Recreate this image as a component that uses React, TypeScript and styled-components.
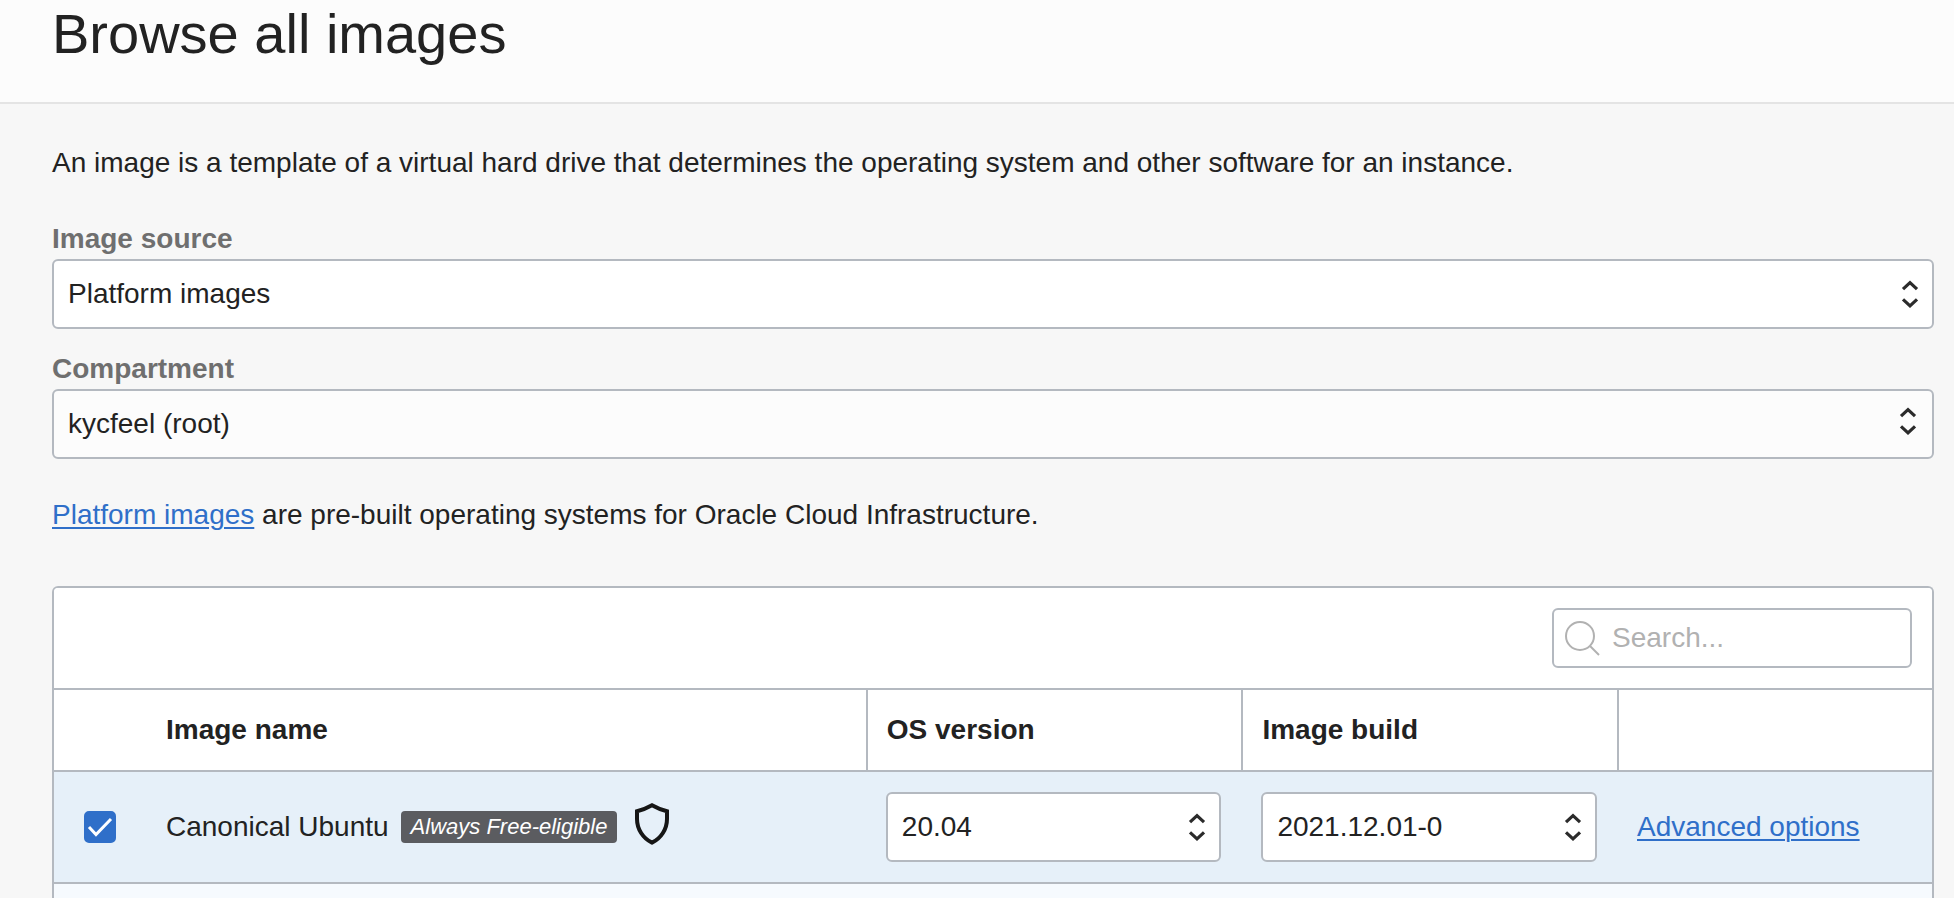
import React from "react";
import styled, { createGlobalStyle } from "styled-components";

const GlobalStyle = createGlobalStyle`
  *, *::before, *::after { box-sizing: border-box; }
  html { background: #f7f7f7; }
  body {
    margin: 0;
    color: #222222;
    font-family: "Liberation Sans", Arial, sans-serif;
    font-size: 28px;
    line-height: 40px;
  }
`;

const line = "#b4b9c0";

const Page = styled.div`
  min-height: 100vh;
  display: flex;
  flex-direction: column;
`;

const Header = styled.header`
  padding: 0 52px 34px;
  background: #fcfcfc;
  border-bottom: 2px solid #e4e4e4;
`;

const Title = styled.h1`
  margin: 0;
  font-size: 56px;
  line-height: 68px;
  font-weight: 400;
`;

const Content = styled.main`
  flex: 1;
  display: flex;
  flex-direction: column;
  padding: 39px 20px 0 52px;
`;

const Paragraph = styled.p`
  margin: 0;
`;

const Fields = styled.div`
  display: flex;
  flex-direction: column;
  gap: 20px;
  margin: 36px 0;
`;

const Field = styled.div`
  display: flex;
  flex-direction: column;
`;

const Label = styled.label`
  color: #6f6f6f;
  font-weight: 700;
`;

const SelectBox = styled.div`
  display: grid;
  grid-template-columns: minmax(0, 1fr);
  align-items: center;
`;

const Select = styled.select<{ $muted?: boolean }>`
  grid-area: 1 / 1;
  width: 100%;
  height: 70px;
  padding: 0 48px 0 14px;
  appearance: none;
  background: ${(p) => (p.$muted ? "#fcfcfc" : "#ffffff")};
  border: 2px solid ${line};
  border-radius: 6px;
  color: inherit;
  font: inherit;
`;

const Arrows = styled.svg<{ $muted?: boolean }>`
  grid-area: 1 / 1;
  justify-self: end;
  width: 18px;
  height: 30px;
  margin: ${(p) => (p.$muted ? "0 17px 6px 0" : "0 15px 0 0")};
  pointer-events: none;
`;

const Link = styled.a`
  color: #2f6fc9;
  text-decoration: underline;
  text-decoration-thickness: 2px;
  text-underline-offset: 3px;
`;

const Panel = styled.section`
  flex: 1;
  margin-top: 51px;
  background: #f6fafe;
  border: 2px solid ${line};
  border-bottom: 0;
  border-radius: 6px 6px 0 0;
`;

const Toolbar = styled.div`
  display: flex;
  justify-content: flex-end;
  padding: 20px;
  background: #ffffff;
  border-radius: 4px 4px 0 0;
`;

const SearchBox = styled.label`
  display: flex;
  align-items: center;
  gap: 12px;
  width: 360px;
  height: 60px;
  padding: 0 10px;
  border: 2px solid ${line};
  border-radius: 6px;
`;

const SearchIcon = styled.svg`
  flex: none;
  width: 36px;
  height: 36px;
`;

const SearchInput = styled.input`
  flex: 1;
  min-width: 0;
  padding: 0;
  border: 0;
  outline: 0;
  background: transparent;
  color: inherit;
  font: inherit;
  &::placeholder { color: #b1b1b1; opacity: 1; }
`;

const Table = styled.table`
  width: 100%;
  table-layout: fixed;
  border-collapse: separate;
  border-spacing: 0;
`;

const HeadCell = styled.th<{ $width?: string; $divided?: boolean }>`
  width: ${(p) => p.$width ?? "auto"};
  height: 84px;
  padding: 0 ${(p) => (p.$divided ? "19px" : "20px")};
  background: #ffffff;
  border-top: 2px solid ${line};
  border-bottom: 2px solid ${line};
  border-left: ${(p) => (p.$divided ? `2px solid ${line}` : "0")};
  font-weight: 700;
  text-align: left;
`;

const Cell = styled.td<{ $check?: boolean }>`
  height: 112px;
  padding: 0 20px 0 ${(p) => (p.$check ? "30px" : "20px")};
  background: #e6f0f9;
  border-bottom: 2px solid ${line};
`;

const CheckBox = styled.span`
  display: grid;
  width: 32px;
  height: 32px;
`;

const CheckInput = styled.input`
  grid-area: 1 / 1;
  width: 32px;
  height: 32px;
  margin: 0;
  appearance: none;
  background: #ffffff;
  border: 2px solid ${line};
  border-radius: 5px;
  &:checked { background: #2f6fc9; border-color: #2f6fc9; }
  &:not(:checked) + svg { visibility: hidden; }
`;

const CheckMark = styled.svg`
  grid-area: 1 / 1;
  width: 32px;
  height: 32px;
  z-index: 1;
  pointer-events: none;
`;

const NameGroup = styled.div`
  display: flex;
  align-items: center;
`;

const Badge = styled.span`
  margin-left: 12px;
  padding: 0 10px;
  background: #5b5c60;
  border-radius: 4px;
  color: #ffffff;
  font-size: 22px;
  font-style: italic;
  line-height: 32px;
  white-space: nowrap;
`;

const Shield = styled.svg`
  width: 36px;
  height: 44px;
  margin-left: 17px;
  margin-bottom: 6px;
`;

type PickerProps = { id?: string; label?: string; value: string; muted?: boolean };

function Picker({ id, label, value, muted }: PickerProps) {
  return (
    <SelectBox>
      <Select id={id} aria-label={label} defaultValue={value} $muted={muted}>
        <option>{value}</option>
      </Select>
      <Arrows
        $muted={muted}
        viewBox="0 0 18 30"
        fill="none"
        stroke="#2b2b2b"
        strokeWidth="3.2"
        aria-hidden="true"
      >
        <path d="M2 10.200 9 3.600l7 6.600M2 20.300l7 6.600 7-6.600" />
      </Arrows>
    </SelectBox>
  );
}

export default function App() {
  return (
    <Page>
      <GlobalStyle />
      <Header>
        <Title>Browse all images</Title>
      </Header>
      <Content>
        <Paragraph>
          An image is a template of a virtual hard drive that determines the operating system and
          other software for an instance.
        </Paragraph>
        <Fields>
          <Field>
            <Label htmlFor="image-source">Image source</Label>
            <Picker id="image-source" value="Platform images" />
          </Field>
          <Field>
            <Label htmlFor="compartment">Compartment</Label>
            <Picker id="compartment" value="kycfeel (root)" muted />
          </Field>
        </Fields>
        <Paragraph>
          <Link href="#platform-images">Platform images</Link> are pre-built operating systems for
          Oracle Cloud Infrastructure.
        </Paragraph>
        <Panel>
          <Toolbar>
            <SearchBox>
              <SearchIcon viewBox="0 0 36 36" fill="none" stroke="#b1b1b1" strokeWidth="2" aria-hidden="true">
                <circle cx="16" cy="16" r="14" />
                <path d="M26 26l9 9" />
              </SearchIcon>
              <SearchInput type="search" placeholder="Search..." aria-label="Search" />
            </SearchBox>
          </Toolbar>
          <Table>
            <thead>
              <tr>
                <HeadCell $width="92px" />
                <HeadCell>Image name</HeadCell>
                <HeadCell $width="20%" $divided>OS version</HeadCell>
                <HeadCell $width="20%" $divided>Image build</HeadCell>
                <HeadCell $width="315px" $divided />
              </tr>
            </thead>
            <tbody>
              <tr>
                <Cell $check>
                  <CheckBox>
                    <CheckInput type="checkbox" defaultChecked aria-label="Canonical Ubuntu" />
                    <CheckMark viewBox="0 0 32 32" fill="none" stroke="#ffffff" strokeWidth="3" aria-hidden="true">
                      <path d="M5 16l7 7.500L27 8" />
                    </CheckMark>
                  </CheckBox>
                </Cell>
                <Cell>
                  <NameGroup>
                    Canonical Ubuntu
                    <Badge>Always Free-eligible</Badge>
                    <Shield viewBox="0 0 36 44" fill="none" stroke="#161616" strokeWidth="4" role="img" aria-label="Shielded">
                      <path d="M18 3.200C13 6 8 8 3 9.300V17c0 10 6 19.500 15 23.600C27 36.500 33 27 33 17V9.300C28 8 23 6 18 3.200z" />
                    </Shield>
                  </NameGroup>
                </Cell>
                <Cell><Picker label="OS version" value="20.04" /></Cell>
                <Cell><Picker label="Image build" value="2021.12.01-0" /></Cell>
                <Cell><Link href="#advanced">Advanced options</Link></Cell>
              </tr>
            </tbody>
          </Table>
        </Panel>
      </Content>
    </Page>
  );
}
